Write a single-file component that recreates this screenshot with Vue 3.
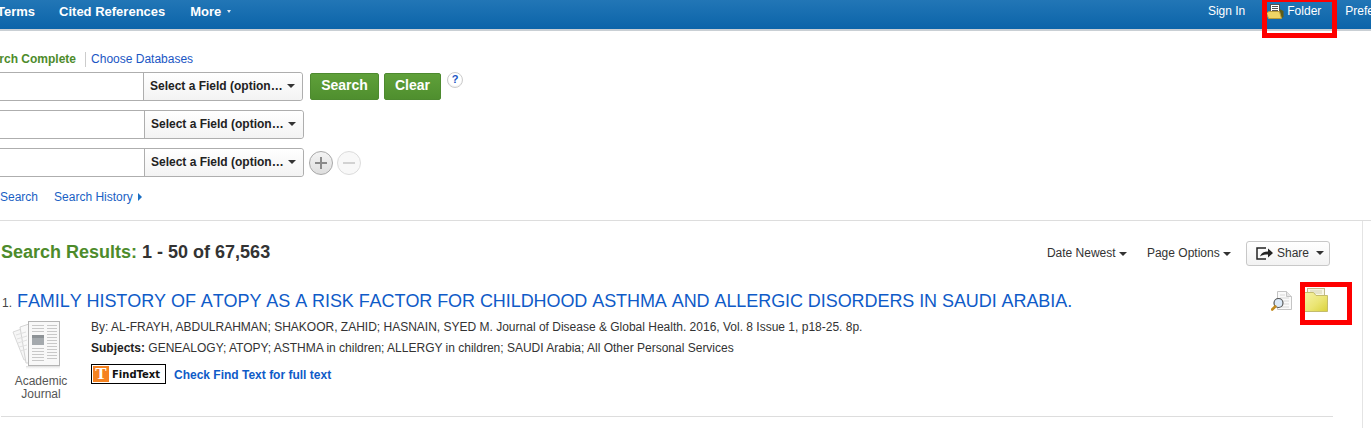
<template>
  <div class="page">
    <header class="topbar">
      <nav class="nav-left">
        <a>Terms</a>
        <a>Cited References</a>
        <a class="more">More <i class="tiny-caret"></i></a>
      </nav>
      <nav class="nav-right">
        <a class="sign-in">Sign In</a>
        <a class="folder-link">
          <svg width="18" height="15" viewBox="0 0 18 15">
            <rect x="4.500" y="0.500" width="9" height="8" fill="#fff" stroke="#555" />
            <path d="M6 2.500h6M6 4.500h6M6 6.500h6" stroke="#555" />
            <path d="M13.500 5l4 2v6l-2.500 1.500z" fill="#5e5c16" />
            <path d="M0.500 9L3 7.500h10.500L15.500 14.500H2.500z" fill="#eed565" stroke="#b79c3a" />
          </svg>
          Folder
        </a>
        <a>Preferences</a>
      </nav>
    </header>

    <section class="search">
      <div class="db-line">
        <span class="db-name">Search Complete</span>
        <a class="db-choose">Choose Databases</a>
      </div>

      <div v-for="(row, i) in rows" :key="i" class="row" :class="{ first: i === 0 }">
        <div class="field-group">
          <div class="term"></div>
          <div class="field">
            <span>Select a Field (option…</span>
            <i class="caret dark"></i>
          </div>
        </div>
        <template v-if="i === 0">
          <button class="btn search-btn">Search</button>
          <button class="btn clear-btn">Clear</button>
          <span class="help">?</span>
        </template>
        <template v-if="i === 2">
          <span class="round plus">
            <svg width="14" height="14" viewBox="0 0 14 14"><path d="M7 1v12M1 7h12" stroke="#8a8a8a" stroke-width="2" /></svg>
          </span>
          <span class="round minus">
            <svg width="14" height="14" viewBox="0 0 14 14"><path d="M1 7h12" stroke="#d2d2d2" stroke-width="2" /></svg>
          </span>
        </template>
      </div>

      <div class="search-links">
        <a>Search</a>
        <a>Search History <i class="right-arrow"></i></a>
      </div>
    </section>

    <section class="results">
      <div class="results-head">
        <h1><span class="green">Search Results:</span> 1 - 50 of 67,563</h1>
        <div class="tools">
          <a>Date Newest <i class="caret"></i></a>
          <a>Page Options <i class="caret"></i></a>
          <button class="share">
            <svg width="17" height="13" viewBox="0 0 17 13">
              <path d="M10 1H1v11h9" fill="none" stroke="#222" stroke-width="1.500" />
              <path d="M4 9.500c1-3.500 4-5 8-5V1.500l5 4.500-5 4.500V7.500C9 7.500 6 8 4 9.500z" fill="#222" />
            </svg>
            Share
            <i class="caret"></i>
          </button>
        </div>
      </div>

      <article class="record">
        <div class="title-line">
          <span class="num">1.</span>
          <a class="title">FAMILY HISTORY OF ATOPY AS A RISK FACTOR FOR CHILDHOOD ASTHMA AND ALLERGIC DISORDERS IN SAUDI ARABIA.</a>
          <div class="record-icons">
            <svg width="22" height="20" viewBox="0 0 22 20">
              <path d="M6.500 0.500h9l5 5v13h-14z" fill="#fafafa" stroke="#c4c4c4" />
              <path d="M15.500 0.500v5h5" fill="#e6e6e6" stroke="#c4c4c4" />
              <path d="M9 4h5M9 7h9M12 10h6M13 13h5M10 16h8" stroke="#d8d8d8" />
              <circle cx="7.500" cy="12" r="4.500" fill="#dbe9f7" stroke="#555" stroke-width="1.200" />
              <path d="M4.300 15.500L1.200 18.500" stroke="#c28a1e" stroke-width="2.600" stroke-linecap="round" />
            </svg>
            <svg class="folder" width="24" height="24" viewBox="0 0 24 24">
              <defs>
                <linearGradient id="fold" x1="0" y1="0" x2="1" y2="1">
                  <stop offset="0" stop-color="#f6f2a6" />
                  <stop offset="0.550" stop-color="#ebe574" />
                  <stop offset="1" stop-color="#dad23a" />
                </linearGradient>
              </defs>
              <rect x="3.500" y="0.500" width="17" height="10" fill="#f8f7e4" stroke="#c2b98a" />
              <path d="M6 3h12M6 5h12" stroke="#d3d0b0" />
              <path d="M0.500 4.500h9l2.500 3h11.500v16H0.500z" fill="url(#fold)" stroke="#c4bc6c" />
            </svg>
          </div>
        </div>
        <div class="record-body">
          <div class="doc-type">
            <svg width="50" height="50" viewBox="0 0 50 50">
              <defs>
                <linearGradient id="shade" x1="0" y1="0" x2="0" y2="1">
                  <stop offset="0" stop-color="#d6d6d6" stop-opacity="0.9" />
                  <stop offset="1" stop-color="#fff" stop-opacity="0" />
                </linearGradient>
              </defs>
              <rect x="14" y="46" width="34" height="4" fill="url(#shade)" />
              <path d="M1 12l14-5 4 32-7 1z" fill="#f6f6f6" stroke="#d8d8d8" />
              <path d="M8 7l12-4v40h-6z" fill="#f9f9f9" stroke="#d4d4d4" />
              <path d="M4 15l10-3M5 19l10-3M6 23l9-3M7 27l8-2M8 31l7-2" stroke="#e0e0e0" />
              <rect x="16.500" y="1.500" width="31" height="44" fill="#f8f8f8" stroke="#b4b4b4" />
              <rect x="20" y="15" width="12" height="10" fill="#a4a9ad" />
              <rect x="20" y="15" width="12" height="3" fill="#8d9296" />
              <path d="M20 5.500h12M20 8.500h12M20 11.500h12M35 5.500h10M35 8.500h10M35 11.500h10M35 14.500h10M35 17.500h10M35 20.500h10M35 23.500h10M35 26.500h10M35 29.500h10M35 32.500h10M35 35.500h10M35 38.500h10M20 28.500h12M20 31.500h12M20 34.500h12M20 37.500h12M20 40.500h12" stroke="#c8c8c8" />
            </svg>
            <span>Academic<br />Journal</span>
          </div>
          <div class="details">
            <p class="by">By: AL-FRAYH, ABDULRAHMAN; SHAKOOR, ZAHID; HASNAIN, SYED M. Journal of Disease &amp; Global Health. 2016, Vol. 8 Issue 1, p18-25. 8p.</p>
            <p class="subjects"><b>Subjects:</b> GENEALOGY; ATOPY; ASTHMA in children; ALLERGY in children; SAUDI Arabia; All Other Personal Services</p>
            <div class="fulltext">
              <span class="findtext">
                <span class="ut">T</span>
                <span class="ft-label">FindText</span>
              </span>
              <a>Check Find Text for full text</a>
            </div>
          </div>
        </div>
      </article>
    </section>

    <div class="mark mark-top"></div>
    <div class="mark mark-folder"></div>
  </div>
</template>

<script setup>
const rows = [0, 1, 2]
</script>

<style>
html, body {
  margin: 0;
  overflow: hidden;
}
</style>

<style scoped>
.page {
  position: relative;
  width: 1371px;
  height: 428px;
  overflow: hidden;
  background: #fff;
  font-family: "Liberation Sans", Arial, sans-serif;
  font-size: 12px;
  color: #333;
}

a { cursor: pointer; }

.topbar {
  display: flex;
  align-items: flex-start;
  height: 29px;
  background: linear-gradient(#2276b6, #0b64a9);
  border-bottom: 2px solid #c9cfd4;
  color: #fff;
}
.nav-left {
  display: flex;
  gap: 24px;
  margin-left: -3px;
  padding-top: 4px;
  font-size: 13px;
  font-weight: bold;
  line-height: 15px;
}
.nav-right {
  display: flex;
  flex-shrink: 0;
  gap: 24px;
  margin-left: auto;
  margin-right: -39px;
  padding-top: 4px;
  line-height: 14px;
}
.more { display: flex; align-items: center; gap: 6px; margin-left: 1px; }
.tiny-caret {
  border: 2.500px solid transparent;
  border-top: 3px solid #dfe9f2;
  border-bottom: 0;
}
.sign-in { margin-right: 1px; }
.folder-link { display: flex; align-items: flex-start; gap: 3px; margin-left: -4px; }

.search { padding: 21px 0 0; height: 190px; box-sizing: border-box; border-bottom: 1px solid #ddd; }
.db-line {
  display: flex;
  align-items: center;
  height: 15px;
  margin-left: -22px;
  line-height: 15px;
  margin-bottom: 5px;
}
.db-name {
  color: #4d8b2b;
  font-weight: bold;
  padding-right: 9px;
  border-right: 1px solid #ccc;
  margin-right: 5px;
}
.db-choose { color: #1a56c4; }

.row {
  display: flex;
  align-items: flex-start;
  height: 29px;
  margin-bottom: 9px;
  margin-left: -10px;
}
.field-group { display: flex; width: 314px; height: 29px; box-sizing: border-box; border: 1px solid #aeaeae; border-radius: 3px; }
.term { width: 153px; background: #fff; }
.field {
  flex: 1;
  display: flex;
  align-items: center;
  padding: 0 6px 2px 6px;
  gap: 4px;
  border-left: 1px solid #aeaeae;
  background: linear-gradient(#fff, #f3f3f3);
  color: #222;
  font-weight: bold;
  white-space: nowrap;
  border-radius: 0 3px 3px 0;
}
.first .field-group { width: 313px; }
.first .term { width: 152px; }

.caret {
  display: inline-block;
  border: 4px solid transparent;
  border-top: 4px solid #333;
  border-bottom: 0;
  vertical-align: middle;
}

.btn {
  height: 27px;
  margin-top: 1px;
  padding: 0 0 3px;
  border: 1px solid #4d8a2f;
  border-radius: 2px;
  background: linear-gradient(#5fa03a, #4f8f2e);
  color: #fff;
  font: bold 14px "Liberation Sans", Arial, sans-serif;
}
.search-btn { width: 69px; margin-left: 7px; }
.clear-btn { width: 57px; margin-left: 5px; }
.help {
  box-sizing: border-box;
  width: 16px;
  height: 16px;
  margin: 0 0 0 6px;
  border: 1px solid #ccc;
  border-radius: 50%;
  color: #1a56c4;
  font-weight: bold;
  font-size: 11px;
  line-height: 13px;
  text-align: center;
  box-shadow: inset 0 -1px 1px #eee;
}
.round {
  display: flex;
  align-items: center;
  justify-content: center;
  box-sizing: border-box;
  width: 24px;
  height: 24px;
  margin-top: 3px;
  border-radius: 50%;
}
.plus { margin-left: 5px; border: 1px solid #a8a8a8; background: linear-gradient(#f4f4f4, #dedede); }
.minus { margin-left: 4px; border: 1px solid #dcdcdc; background: #f8f8f8; }

.search-links {
  display: flex;
  gap: 16px;
  margin-top: 13px;
  line-height: 14px;
  color: #1a5fc4;
}
.right-arrow {
  display: inline-block;
  margin-left: 2px;
  border: 4px solid transparent;
  border-left: 4px solid #1a6fc4;
  border-right: 0;
}

.results {
  height: 207px;
  margin-right: 8px;
  border-right: 1px solid #e4e4e4;
}
.results-head {
  display: flex;
  align-items: center;
  justify-content: space-between;
  height: 26px;
  padding: 19px 32px 1px 1px;
}
h1 {
  margin: 0 0 2px;
  font-size: 18px;
  line-height: 22px;
  font-weight: bold;
  color: #333;
}
.green { color: #4d8b2b; }
.tools { display: flex; align-items: center; gap: 20px; color: #333; }
.share {
  display: flex;
  align-items: center;
  gap: 4px;
  box-sizing: border-box;
  width: 84px;
  height: 25px;
  margin-left: -5px;
  padding: 0 6px 0 9px;
  border: 1px solid #c8c8c8;
  border-radius: 3px;
  background: linear-gradient(#fff, #f2f2f2);
  color: #333;
  font: 12px "Liberation Sans", Arial, sans-serif;
}
.share svg { flex-shrink: 0; }
.share .caret { margin-left: 3px; }

.record {
  height: 125px;
  margin: 0 29px 0 1px;
  border-bottom: 1px solid #ddd;
}
.title-line {
  display: flex;
  align-items: flex-start;
  height: 21px;
  margin-top: 24px;
}
.num { width: 15px; margin-left: 1px; margin-top: 5px; color: #444; }
.title {
  font-size: 18px;
  line-height: 20px;
  color: #0f5bc8;
  white-space: nowrap;
  font-kerning: none;
  letter-spacing: -0.070px;
}
.record-icons {
  display: flex;
  align-items: flex-start;
  gap: 11px;
  margin-left: auto;
  margin-right: 5px;
}
.record-icons .folder { margin-top: -3px; }

.record-body { display: flex; margin-top: 8px; }
.doc-type {
  display: flex;
  flex-direction: column;
  align-items: center;
  width: 80px;
  color: #555;
  line-height: 13px;
  text-align: center;
}
.doc-type svg { margin: 0 0 5px -9px; }
.details { margin-left: 10px; }
.details p { margin: 0; line-height: 14px; color: #333; }
.by { color: #444; }
.subjects { margin-top: 7px !important; }
.subjects b { color: #222; }
.fulltext { display: flex; align-items: center; gap: 8px; margin-top: 9px; }
.fulltext a { margin-top: 2px; color: #0f5bc8; font-weight: bold; }
.findtext {
  display: flex;
  align-items: center;
  gap: 3px;
  box-sizing: border-box;
  width: 75px;
  height: 20px;
  padding: 1px;
  border: 1px solid #000;
}
.ut {
  width: 16px;
  height: 16px;
  background: #f58220;
  color: #fff;
  font: bold 17px/16px "Liberation Serif", serif;
  text-align: center;
}
.ft-label {
  color: #111;
  font: bold 10px "DejaVu Sans", sans-serif;
}

.mark {
  position: absolute;
  box-sizing: border-box;
  border: 5px solid #fe0000;
  pointer-events: none;
}
.mark-top { left: 1262px; top: -3px; width: 75px; height: 41px; }
.mark-folder { left: 1300px; top: 282px; width: 52px; height: 43px; }
</style>
